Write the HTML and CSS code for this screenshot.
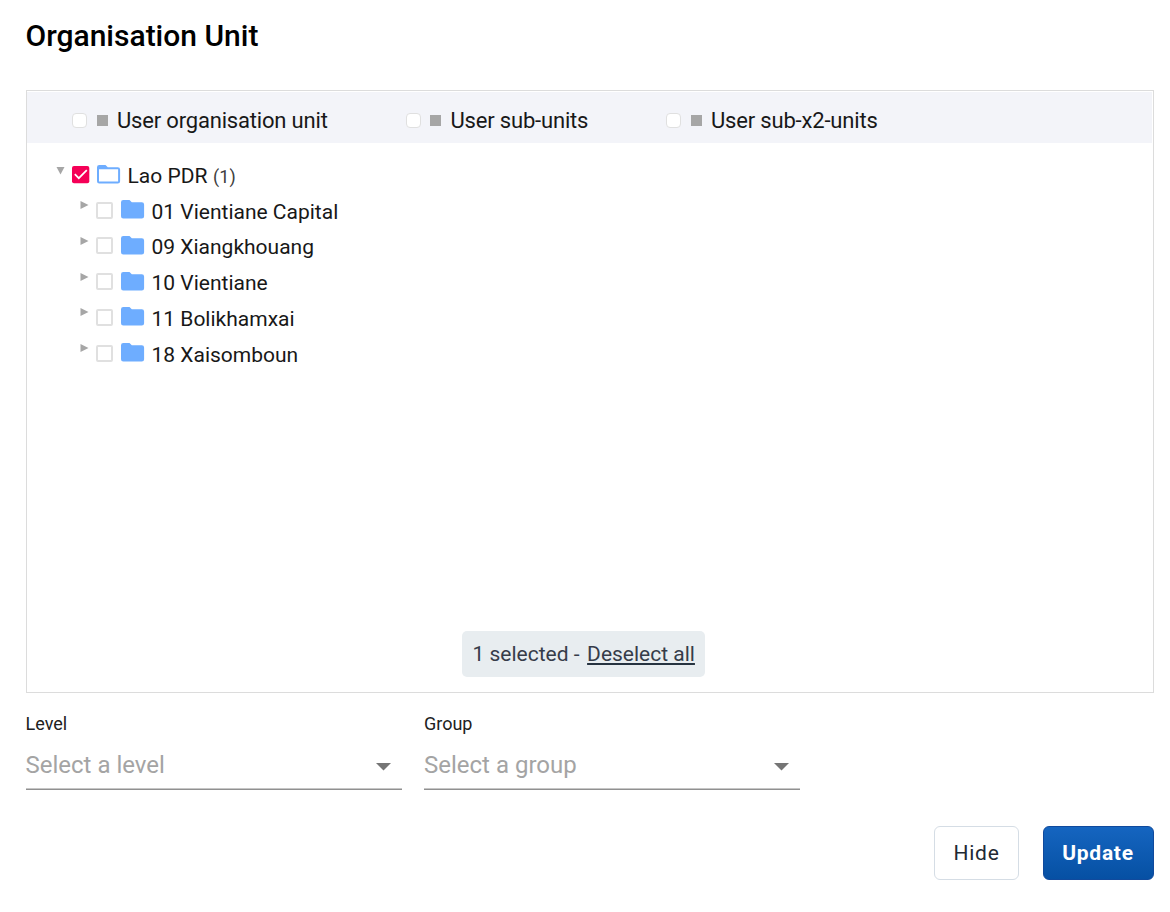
FILE: index.html
```
<!DOCTYPE html>
<html lang="en">
<head>
<meta charset="utf-8">
<title>Organisation Unit</title>
<link rel="stylesheet" href="styles.css">
</head>
<body>
<main class="dialog">
  <h1 class="title">Organisation Unit</h1>
  <section class="panel">
    <div class="options">
      <label class="option option-unit"><span class="soft-check"></span><span class="square"></span><span class="option-text">User organisation unit</span></label>
      <label class="option option-sub"><span class="soft-check"></span><span class="square"></span><span class="option-text">User sub-units</span></label>
      <label class="option option-sub2"><span class="soft-check"></span><span class="square"></span><span class="option-text">User sub-x2-units</span></label>
    </div>
    <div class="tree">
      <div class="node root">
        <svg class="arrow" viewBox="0 0 9 8"><path d="M.5 0h8L4.500 7.500z"/></svg>
        <svg class="check" viewBox="0 0 18 18"><rect width="17.300" height="17.300" rx="2" fill="#f50057"/><path d="M2.800 8.200l4 4 8-8" fill="none" stroke="#fff" stroke-width="1.700"/></svg>
        <svg class="folder" viewBox="0 0 24 19"><path fill-rule="evenodd" d="M2.300 0h6.200l2.300 2.300h10q2.300 0 2.300 2.300v11.600q0 2.300-2.300 2.300H2.300Q0 18.500 0 16.200V2.300Q0 0 2.300 0zM2 4.300V16.500H21.100V4.300z" fill="#6eadff"/></svg>
        <span class="node-text">Lao PDR <span class="count">(1)</span></span>
      </div>
      <div class="children">
        <div class="node"><svg class="arrow" viewBox="0 0 9 8"><path d="M.5 0l8 4-8 4z"/></svg><span class="check empty"></span><svg class="folder" viewBox="0 0 24 19"><path d="M2.300 0h6.200l2.300 2.300h10q2.300 0 2.300 2.300v11.600q0 2.300-2.300 2.300H2.300Q0 18.500 0 16.200V2.300Q0 0 2.300 0z" fill="#6eadff"/></svg><span class="node-text">01 Vientiane Capital</span></div>
        <div class="node"><svg class="arrow" viewBox="0 0 9 8"><path d="M.5 0l8 4-8 4z"/></svg><span class="check empty"></span><svg class="folder" viewBox="0 0 24 19"><path d="M2.300 0h6.200l2.300 2.300h10q2.300 0 2.300 2.300v11.600q0 2.300-2.300 2.300H2.300Q0 18.500 0 16.200V2.300Q0 0 2.300 0z" fill="#6eadff"/></svg><span class="node-text">09 Xiangkhouang</span></div>
        <div class="node"><svg class="arrow" viewBox="0 0 9 8"><path d="M.5 0l8 4-8 4z"/></svg><span class="check empty"></span><svg class="folder" viewBox="0 0 24 19"><path d="M2.300 0h6.200l2.300 2.300h10q2.300 0 2.300 2.300v11.600q0 2.300-2.300 2.300H2.300Q0 18.500 0 16.200V2.300Q0 0 2.300 0z" fill="#6eadff"/></svg><span class="node-text">10 Vientiane</span></div>
        <div class="node"><svg class="arrow" viewBox="0 0 9 8"><path d="M.5 0l8 4-8 4z"/></svg><span class="check empty"></span><svg class="folder" viewBox="0 0 24 19"><path d="M2.300 0h6.200l2.300 2.300h10q2.300 0 2.300 2.300v11.600q0 2.300-2.300 2.300H2.300Q0 18.500 0 16.200V2.300Q0 0 2.300 0z" fill="#6eadff"/></svg><span class="node-text">11 Bolikhamxai</span></div>
        <div class="node"><svg class="arrow" viewBox="0 0 9 8"><path d="M.5 0l8 4-8 4z"/></svg><span class="check empty"></span><svg class="folder" viewBox="0 0 24 19"><path d="M2.300 0h6.200l2.300 2.300h10q2.300 0 2.300 2.300v11.600q0 2.300-2.300 2.300H2.300Q0 18.500 0 16.200V2.300Q0 0 2.300 0z" fill="#6eadff"/></svg><span class="node-text">18 Xaisomboun</span></div>
      </div>
    </div>
    <div class="selection"><span>1 selected -</span><a class="deselect">Deselect all</a></div>
  </section>
  <div class="fields">
    <div class="field field-level"><div class="field-label">Level</div><div class="select"><span>Select a level</span><svg class="caret" viewBox="0 0 15 8"><path d="M0 0h15L7.500 7.500z"/></svg></div></div>
    <div class="field"><div class="field-label">Group</div><div class="select"><span>Select a group</span><svg class="caret" viewBox="0 0 15 8"><path d="M0 0h15L7.500 7.500z"/></svg></div></div>
  </div>
  <div class="actions">
    <button class="button hide">Hide</button>
    <button class="button update">Update</button>
  </div>
</main>
</body>
</html>
```
FILE: styles.css
```
* { box-sizing: border-box; }
body { margin: 0; background: #fff; color: #181818; font-family: Roboto, sans-serif; }
svg { display: block; flex: none; }
.dialog { width: 1170px; height: 912px; padding: 16px 16px 0 26px; }
.title { margin: 0 0 34px -.5px; height: 40px; line-height: 40px; font-size: 30px; font-weight: 500; color: #000; }
.panel { display: flex; flex-direction: column; width: 1128px; height: 603px; border: 1px solid #dcdcdc; padding: 1px 1px 15px 0; }
.options { display: flex; height: 51px; padding: 4px 0 0 45px; background: #f3f4f9; }
.option { display: flex; align-items: center; height: 48px; font-size: 22px; letter-spacing: -.18px; white-space: nowrap; }
.option-unit { width: 334px; }
.option-sub { width: 260px; }
.soft-check { width: 15px; height: 15px; border: 1px solid #e0e0e0; border-radius: 4px; background: #fff; flex: none; }
.square { width: 11px; height: 11px; margin-left: 10px; margin-right: 9px; background: #a6a6a6; flex: none; }
.option-sub .square { margin-left: 9px; margin-right: 9.500px; }
.tree { flex: 1; padding: 14.900px 0 0 29px; }
.node { display: flex; height: 35.750px; }
.children { padding-left: 24px; }
.arrow { width: 9px; height: 8px; margin: 9.500px 7px 0 0; fill: #a6a6a6; }
.children .arrow { margin-top: 7.500px; }
.check { width: 18px; height: 18px; margin: 8px 7px 0 0; }
.check.empty { width: 17px; height: 17px; margin: 8px 8px 0 0; border: 2px solid #e0e0e0; border-radius: 2px; }
.folder { width: 24px; height: 19px; margin: 7px 6.500px 0 0; }
.children .folder { margin-top: 6.600px; }
.node-text { line-height: 36px; font-size: 21px; color: #181818; white-space: nowrap; }
.count { margin-left: .5px; font-size: 18px; color: #404040; }
.selection { align-self: center; display: flex; align-items: center; gap: 7.500px; width: 243px; height: 46px; padding-left: 10.500px; margin-right: 12px; background: #e8edf0; border-radius: 5px; color: #363c49; font-size: 21px; white-space: nowrap; }
.deselect { text-decoration: underline; text-decoration-thickness: 2px; text-underline-offset: 2px; text-decoration-color: #263340; }
.fields { display: flex; gap: 22px; margin-top: 18px; }
.field { width: 376px; }
.field-level { text-indent: -.5px; }
.field-label { height: 26px; line-height: 26px; font-size: 18px; color: #212121; }
.select { display: flex; justify-content: space-between; height: 53px; line-height: 57px; padding-right: 11px; border-bottom: 1px solid #909090; box-shadow: inset 0 -1px #c6c6c6; color: #a4a4a4; font-size: 24px; }
.caret { width: 15px; height: 8px; margin-top: 26px; fill: #757575; }
.actions { display: flex; justify-content: flex-end; gap: 24px; margin-top: 36px; }
.button { height: 54px; padding: 0; border-radius: 6px; font-family: Roboto, sans-serif; font-size: 21px; letter-spacing: .75px; }
.hide { width: 85px; border: 1px solid #d5dde5; background: #fff; color: #212934; }
.update { width: 111px; border: 1px solid #104a9d; background: linear-gradient(#1565c0, #0650a3); color: #fff; font-weight: 700; padding-right: 1px; }
```
